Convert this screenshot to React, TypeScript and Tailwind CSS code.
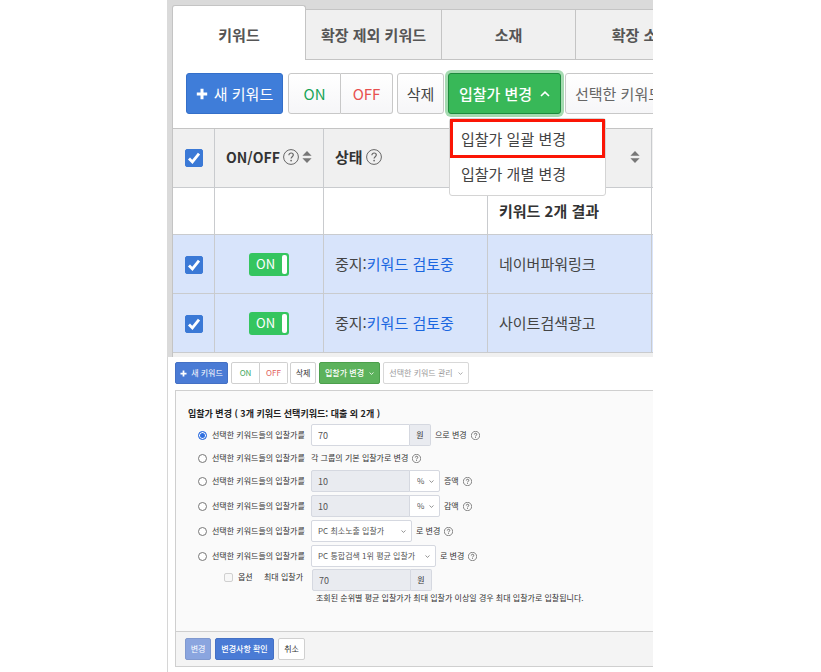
import { useState, type ReactNode } from "react"
import { clsx } from "clsx"

interface KeywordRow {
  id: string
  name: string
}

const keywords: KeywordRow[] = [
  { id: "kw-1", name: "네이버파워링크" },
  { id: "kw-2", name: "사이트검색광고" },
]

function PlusIcon({ className }: { className: string }) {
  return (
    <svg viewBox="0 0 12 12" className={className} aria-hidden="true">
      <path d="M6 0.8v10.4M0.8 6h10.4" fill="none" stroke="currentColor" strokeWidth="3" />
    </svg>
  )
}

function Chevron({ className }: { className: string }) {
  return (
    <svg viewBox="0 0 10 6" className={className} aria-hidden="true">
      <path d="M1 1l4 3.8L9 1" fill="none" stroke="currentColor" strokeWidth="1.6" />
    </svg>
  )
}

function HelpIcon({ className }: { className: string }) {
  return (
    <svg viewBox="0 0 16 16" className={clsx("shrink-0", className)} aria-hidden="true">
      <g fill="none" stroke="currentColor" strokeWidth="1">
        <circle cx="8" cy="8" r="7.4" />
        <path d="M5.9 6.2c0-1.4 1-2.2 2.2-2.2s2.2.8 2.2 2c0 1.7-2.2 1.8-2.2 3.6" strokeWidth="1.2" />
      </g>
      <circle cx="8.1" cy="11.6" r="0.85" fill="currentColor" />
    </svg>
  )
}

function SortIcon() {
  return (
    <svg viewBox="0 0 10 12" className="h-3 w-[10px] shrink-0 text-[#777]" aria-hidden="true">
      <path d="M5 0l4.6 4.8H0.4zM5 12l4.6-4.8H0.4z" fill="currentColor" />
    </svg>
  )
}

function CheckBox({ label }: { label: string }) {
  return (
    <span className="inline-grid align-middle">
      <input
        type="checkbox"
        defaultChecked
        aria-label={label}
        className="peer col-start-1 row-start-1 size-[18px] appearance-none rounded-[2px] border border-[#3b79d6] bg-white checked:bg-[#3b79d6]"
      />
      <svg
        viewBox="0 0 18 18"
        className="pointer-events-none col-start-1 row-start-1 size-[18px] opacity-0 peer-checked:opacity-100"
        aria-hidden="true"
      >
        <path d="M4 9.4l3.4 3.5L14 4.6" fill="none" stroke="#fff" strokeWidth="2.8" />
      </svg>
    </span>
  )
}

function Toggle({ label }: { label: string }) {
  const [on, setOn] = useState(true)
  return (
    <button
      type="button"
      role="switch"
      aria-checked={on}
      aria-label={label}
      onClick={() => setOn(!on)}
      className={clsx(
        "inline-flex h-[23px] w-10 items-center justify-between rounded-[3px] pr-[2px] pl-[7px] align-middle text-[13px] leading-4 text-white",
        on ? "bg-[#35c55f]" : "bg-gray-400"
      )}
    >
      {on ? "ON" : "OFF"}
      <span className="h-[19px] w-[5px] rounded-[2px] bg-white" />
    </button>
  )
}

const lightButton = "border border-[#c8c8c8] bg-linear-to-b from-white to-[#f6f6f8]"
const smallButton = "flex h-[22px] items-center justify-center rounded-[2px] border"

function SmallSelect({ label, value, className, disabled }: { label: string; value: string; className: string; disabled?: boolean }) {
  return (
    <span className="inline-grid items-center">
      <select
        aria-label={label}
        disabled={disabled}
        className={clsx(
          "col-start-1 row-start-1 h-[22px] appearance-none border border-[#d5d8e0] bg-white text-[8px] leading-3 text-[#555] opacity-100",
          className
        )}
      >
        <option>{value}</option>
      </select>
      <Chevron className="pointer-events-none col-start-1 row-start-1 mr-[6px] h-[3px] w-[5px] justify-self-end text-[#777]" />
    </span>
  )
}

function BidOption({ id, checked, children }: { id: string; checked?: boolean; children: ReactNode }) {
  return (
    <div className="flex items-center">
      <input
        type="radio"
        id={id}
        name="bid-option"
        defaultChecked={checked}
        className="size-[9px] shrink-0 appearance-none rounded-full border border-[#777] bg-white checked:border-[#2f6fe0] checked:bg-[#2f6fe0] checked:shadow-[inset_0_0_0_1px_#fff]"
      />
      <label htmlFor={id} className="ml-[5px] w-[99px] shrink-0 whitespace-nowrap">
        선택한 키워드들의 입찰가를
      </label>
      {children}
    </div>
  )
}

const amountInput = "h-[22px] w-[99px] border border-[#d5d8e0] px-[6px] text-[9px] leading-3 text-[#555]"
const unitBox = "flex h-[22px] w-[21px] items-center justify-center rounded-r-[2px] border border-l-0 border-[#d5d8e0] bg-[#e9ebf0]"

function KeywordManager() {
  const [menuOpen, setMenuOpen] = useState(true)

  return (
    <section className="overflow-hidden bg-[#dadada] pt-[5px] pl-[5px] text-[15px] leading-5 text-[#444]">
      {/* Tabs */}
      <nav className="flex items-stretch font-bold whitespace-nowrap text-[#555]">
        <button type="button" className="h-[55px] w-[134px] shrink-0 rounded-t-[3px] border-x border-t border-[#c4c4c4] bg-white pt-1">
          키워드
        </button>
        <button type="button" className="mt-1 w-[136px] shrink-0 border-y border-r border-[#c4c4c4] bg-[#f0f0f0]">
          확장 제외 키워드
        </button>
        <button type="button" className="mt-1 w-[134px] shrink-0 border-y border-r border-[#c4c4c4] bg-[#f0f0f0]">
          소재
        </button>
        <button type="button" className="mt-1 w-[132px] shrink-0 border-y border-r border-[#c4c4c4] bg-[#f0f0f0]">
          확장 소재
        </button>
      </nav>

      <div className="border-l border-[#c4c4c4] bg-white">
        {/* Toolbar */}
        <div className="flex h-[68px] items-start pt-[13px] pl-[13px] whitespace-nowrap">
          <button
            type="button"
            className="flex h-[41px] w-[97px] shrink-0 items-center justify-center gap-[6px] rounded-[3px] border border-[#346fc9] bg-[#3f7dd9] text-white"
          >
            <PlusIcon className="size-3" />새 키워드
          </button>
          <div className="ml-[5px] flex shrink-0">
            <button type="button" className={clsx(lightButton, "h-[41px] w-[53px] rounded-l-[3px] text-[#18a558]")}>
              ON
            </button>
            <button type="button" className={clsx(lightButton, "h-[41px] w-[52px] rounded-r-[3px] border-l-0 text-[#e8504f]")}>
              OFF
            </button>
          </div>
          <button type="button" className={clsx(lightButton, "ml-1 h-[41px] w-[47px] shrink-0 rounded-[3px]")}>
            삭제
          </button>
          <div className="relative ml-1 shrink-0">
            <button
              type="button"
              aria-expanded={menuOpen}
              onClick={() => setMenuOpen(!menuOpen)}
              className="flex h-[41px] w-[113px] items-center justify-center gap-2 rounded-[3px] border border-[#1f8a3e] bg-[#38b858] font-medium text-white ring-3 ring-[#a5dbb1]"
            >
              입찰가 변경
              <Chevron className="h-[6px] w-[10px] rotate-180" />
            </button>
            {menuOpen && (
              <div className="absolute top-[45px] left-px z-10 w-[157px] rounded-[3px] border border-[#d4d4d4] bg-white pb-[5px]">
                <button type="button" className="block h-[39px] w-full border-3 border-[#fb1505] pl-2 text-left">
                  입찰가 일괄 변경
                </button>
                <button type="button" className="block h-8 w-full pl-[11px] text-left">
                  입찰가 개별 변경
                </button>
              </div>
            )}
          </div>
          <button
            type="button"
            className={clsx(lightButton, "ml-1 flex h-[41px] shrink-0 items-center gap-2 rounded-[3px] px-[9px] text-[#666]")}
          >
            선택한 키워드 관리
            <Chevron className="h-[6px] w-[10px]" />
          </button>
        </div>

        {/* Keyword table */}
        <table className="w-full table-fixed border-separate border-spacing-0 border-t border-[#c4c4c4] text-left whitespace-nowrap [&_td]:border-b [&_td]:border-[#c9cbce] [&_th]:border-b [&_th]:border-[#c9cbce] [&_th]:pb-[2px]">
          <colgroup>
            <col className="w-[42px]" />
            <col className="w-[109px]" />
            <col className="w-[164px]" />
            <col className="w-[164px]" />
            <col />
          </colgroup>
          <thead>
            <tr className="h-[59px] bg-[#f0f0f0] text-[#333]">
              <th className="border-r text-center">
                <CheckBox label="전체 선택" />
              </th>
              <th className="border-r pl-[11px] text-[14px]">
                <span className="flex items-center gap-[3px]">
                  ON/OFF
                  <HelpIcon className="size-4 text-[#666]" />
                  <SortIcon />
                </span>
              </th>
              <th className="border-r pl-[11px]">
                <span className="flex items-center gap-[3px]">
                  상태
                  <HelpIcon className="size-4 text-[#666]" />
                </span>
              </th>
              <th aria-label="키워드" className="border-r pr-[11px]">
                <span className="flex justify-end">
                  <SortIcon />
                </span>
              </th>
              <th />
            </tr>
          </thead>
          <tbody>
            <tr className="h-[47px] text-[#333]">
              <td className="border-r" />
              <td className="border-r" />
              <td className="border-r" />
              <td className="border-r pl-[11px] font-bold">키워드 2개 결과</td>
              <td />
            </tr>
            {keywords.map((keyword) => (
              <tr key={keyword.id} className="h-[59px] bg-[#d8e4fb]">
                <td className="border-r text-center">
                  <CheckBox label={keyword.name} />
                </td>
                <td className="border-r text-center">
                  <Toggle label={keyword.name} />
                </td>
                <td className="border-r pl-[11px]">
                  중지:
                  <a href="#status" className="text-[#1a66e0]">
                    키워드 검토중
                  </a>
                </td>
                <td className="border-r pl-[11px]">{keyword.name}</td>
                <td />
              </tr>
            ))}
          </tbody>
        </table>
        <div className="h-1 bg-[#f0f0f0]" />
      </div>
    </section>
  )
}

function BidChangeForm() {
  return (
    <section className="overflow-hidden border-l border-[#d6d6d6] bg-white pt-[5px] pb-[5px] pl-[7px] text-[8px] leading-3 text-[#333]">
      <div className="flex whitespace-nowrap">
        <button type="button" className={clsx(smallButton, "w-[53px] gap-1 border-[#4470c4] bg-[#4a7bd5] text-white")}>
          <PlusIcon className="size-[7px]" />새 키워드
        </button>
        <button type="button" className="ml-[3px] h-[22px] w-[29px] rounded-l-[2px] border border-[#d0d0d0] text-[#3fa862]">
          ON
        </button>
        <button type="button" className="h-[22px] w-7 rounded-r-[2px] border border-l-0 border-[#d0d0d0] text-[#e2605c]">
          OFF
        </button>
        <button type="button" className={clsx(smallButton, "ml-[2px] w-[26px] border-[#d0d0d0]")}>
          삭제
        </button>
        <button type="button" className={clsx(smallButton, "ml-[3px] w-[61px] gap-[5px] border-[#4c9f4c] bg-[#5cb25c] font-medium text-white")}>
          입찰가 변경
          <Chevron className="h-[3px] w-[5px]" />
        </button>
        <button type="button" className={clsx(smallButton, "ml-[3px] w-[86px] gap-[5px] border-[#d8d8d8] text-[#999]")}>
          선택한 키워드 관리
          <Chevron className="h-[3px] w-[5px]" />
        </button>
      </div>

      <form className="mt-[6px] border-y border-l border-[#cfcfcf] bg-[#fafafa]" onSubmit={(e) => e.preventDefault()}>
        <div className="pt-[15px] pb-[27px] pl-3">
          <h2 className="text-[9px] leading-4 font-bold text-[#222]">입찰가 변경 ( 3개 키워드 선택키워드: 대출 외 2개 )</h2>

          <div className="mt-[2px] flex flex-col gap-[2px] pl-[10px]">
            <BidOption id="bid-fixed" checked>
              <input aria-label="입찰가" defaultValue="70" className={clsx(amountInput, "rounded-l-[2px] bg-white")} />
              <span className={unitBox}>원</span>
              <span className="mr-1 ml-1">으로 변경</span>
              <HelpIcon className="size-[9px]" />
            </BidOption>
            <div className="py-1">
              <BidOption id="bid-group">
                <span className="mr-1">각 그룹의 기본 입찰가로 변경</span>
                <HelpIcon className="size-[9px]" />
              </BidOption>
            </div>
          </div>

          <div className="mt-[2px] flex flex-col gap-[3px] pl-[10px]">
            <BidOption id="bid-increase">
              <input aria-label="증액" defaultValue="10" disabled className={clsx(amountInput, "rounded-l-[2px] bg-[#e9ebf0]")} />
              <SmallSelect label="증액 단위" value="%" className="-ml-px w-[31px] rounded-r-[2px] pl-[7px]" disabled />
              <span className="mr-1 ml-1">증액</span>
              <HelpIcon className="size-[9px]" />
            </BidOption>
            <BidOption id="bid-decrease">
              <input aria-label="감액" defaultValue="10" disabled className={clsx(amountInput, "rounded-l-[2px] bg-[#e9ebf0]")} />
              <SmallSelect label="감액 단위" value="%" className="-ml-px w-[31px] rounded-r-[2px] pl-[7px]" disabled />
              <span className="mr-1 ml-1">감액</span>
              <HelpIcon className="size-[9px]" />
            </BidOption>
            <BidOption id="bid-minimum">
              <SmallSelect label="최소노출" value="PC 최소노출 입찰가" className="w-[101px] rounded-[2px] pl-[6px]" />
              <span className="mr-1 ml-1">로 변경</span>
              <HelpIcon className="size-[9px]" />
            </BidOption>
            <BidOption id="bid-average">
              <SmallSelect label="평균 입찰가" value="PC 통합검색 1위 평균 입찰가" className="w-[125px] rounded-[2px] pl-[6px]" />
              <span className="mr-1 ml-1">로 변경</span>
              <HelpIcon className="size-[9px]" />
            </BidOption>
          </div>

          <div className="mt-[2px] flex items-start pl-9">
            <label className="flex w-10 items-center gap-[5px] pt-[2px]">
              <input type="checkbox" disabled className="size-[9px] appearance-none rounded-[2px] border border-[#d0d0d0] bg-[#f7f7f7]" />
              옵션
            </label>
            <label htmlFor="max-bid" className="w-12 pt-[2px]">
              최대 입찰가
            </label>
            <input id="max-bid" defaultValue="70" disabled className={clsx(amountInput, "rounded-l-[2px] bg-[#e9ebf0]")} />
            <span className={unitBox}>원</span>
          </div>
          <p className="pt-px pl-32 whitespace-nowrap">조회된 순위별 평균 입찰가가 최대 입찰가 이상일 경우 최대 입찰가로 입찰됩니다.</p>
        </div>

        <div className="flex gap-1 border-t border-[#cfcfcf] bg-[#f4f4f4] py-[6px] pl-[9px]">
          <button type="submit" disabled className={clsx(smallButton, "w-[26px] border-[#8099cf] bg-[#8aa5df] text-white")}>
            변경
          </button>
          <button type="button" className={clsx(smallButton, "w-[59px] border-[#4470c4] bg-[#4a7bd5] font-medium text-white")}>
            변경사항 확인
          </button>
          <button type="button" className={clsx(smallButton, "w-[27px] border-[#d0d0d0] bg-white")}>
            취소
          </button>
        </div>
      </form>
    </section>
  )
}

export default function App() {
  return (
    <main lang="ko" className="bg-white pr-[168px] pl-[167px] font-['Noto_Sans_CJK_KR',sans-serif]">
      <KeywordManager />
      <BidChangeForm />
    </main>
  )
}
